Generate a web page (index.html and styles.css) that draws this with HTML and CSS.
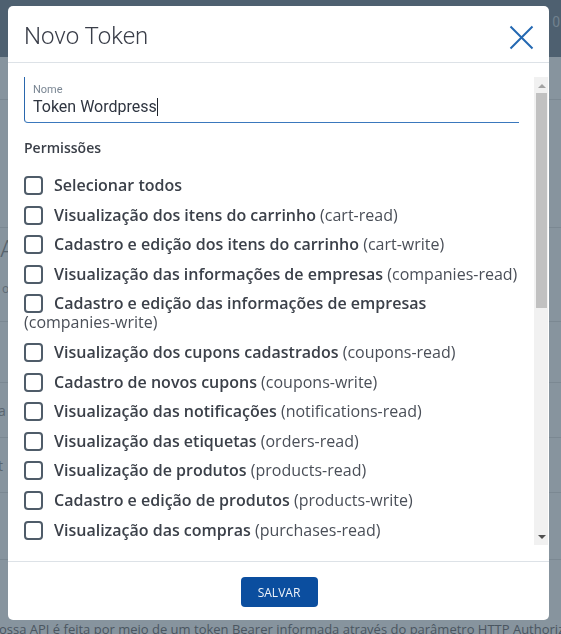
FILE: index.html
```html
<!DOCTYPE html>
<html lang="pt-BR">
<head>
<meta charset="utf-8">
<title>Novo Token</title>
<link rel="stylesheet" href="styles.css">
</head>
<body>
<div class="page">
  <header class="page-header"><span class="page-header-count">0</span></header>
  <div class="page-tabs"></div>
  <section class="page-row page-row-a"></section>
  <section class="page-row page-row-b">
    <h2 class="page-title">API</h2>
    <p class="page-sub">os tokens</p>
  </section>
  <section class="page-row page-row-c"></section>
  <section class="page-row page-row-d"><span class="page-cell">a</span></section>
  <section class="page-row page-row-d"><span class="page-cell">t</span></section>
  <section class="page-row page-row-e"></section>
  <p class="page-text">nossa API é feita por meio de um token Bearer informada através do parâmetro HTTP Authorization.</p>
</div>

<div class="backdrop">
  <div class="modal">
    <div class="modal-header">
      <h1 class="modal-title">Novo Token</h1>
      <svg class="modal-close" width="25" height="25" viewBox="0 0 25 25" aria-label="Fechar">
        <path d="M1.5 1.5 L23.5 23.5 M23.5 1.5 L1.5 23.5" stroke="#2468b2" stroke-width="2" fill="none"/>
      </svg>
    </div>
    <div class="modal-body">
      <div class="modal-scroll">
        <div class="field">
          <div class="field-label">Nome</div>
          <div class="field-value">Token Wordpress<span class="caret"></span></div>
        </div>
        <h3 class="perm-title">Permissões</h3>
        <div class="perm-list">
          <label class="perm"><span class="box"></span><b>Selecionar todos</b></label>
          <label class="perm"><span class="box"></span><b>Visualização dos itens do carrinho</b> (cart-read)</label>
          <label class="perm"><span class="box"></span><b>Cadastro e edição dos itens do carrinho</b> (cart-write)</label>
          <label class="perm"><span class="box"></span><b>Visualização das informações de empresas</b> (companies-read)</label>
          <label class="perm"><span class="box"></span><b>Cadastro e edição das informações de empresas</b> (companies-write)</label>
          <label class="perm"><span class="box"></span><b>Visualização dos cupons cadastrados</b> (coupons-read)</label>
          <label class="perm"><span class="box"></span><b>Cadastro de novos cupons</b> (coupons-write)</label>
          <label class="perm"><span class="box"></span><b>Visualização das notificações</b> (notifications-read)</label>
          <label class="perm"><span class="box"></span><b>Visualização das etiquetas</b> (orders-read)</label>
          <label class="perm"><span class="box"></span><b>Visualização de produtos</b> (products-read)</label>
          <label class="perm"><span class="box"></span><b>Cadastro e edição de produtos</b> (products-write)</label>
          <label class="perm"><span class="box"></span><b>Visualização das compras</b> (purchases-read)</label>
          <label class="perm"><span class="box"></span><b>Cadastro e edição das compras</b> (purchases-write)</label>
          <label class="perm"><span class="box"></span><b>Visualização das vendas</b> (sales-read)</label>
          <label class="perm"><span class="box"></span><b>Cadastro e edição das vendas</b> (sales-write)</label>
        </div>
      </div>
      <div class="scrollbar" aria-hidden="true">
        <span class="scroll-btn"><span class="arrow-up"></span></span>
        <span class="scroll-thumb"></span>
        <span class="scroll-track"></span>
        <span class="scroll-btn"><span class="arrow-down"></span></span>
      </div>
    </div>
    <div class="modal-footer">
      <button class="btn-save" type="button">SALVAR</button>
    </div>
  </div>
</div>
</body>
</html>
```

FILE: styles.css
```css
html, body {
  margin: 0;
  padding: 0;
  overflow: hidden;
}

body {
  width: 561px;
  height: 634px;
  background: #87949e;
  font-family: "Open Sans", "Noto Sans", sans-serif;
}

/* ---- dimmed page behind the modal ---- */
.page {
  margin-left: -9px;
}

.page-header {
  height: 57px;
  background: #4e6070;
  display: flex;
  justify-content: flex-end;
  align-items: center;
  padding-right: 1px;
  box-sizing: border-box;
  padding-bottom: 14px;
}

.page-header-count {
  font-family: "Roboto", sans-serif;
  font-size: 14px;
  color: #71828f;
}

.page-tabs {
  height: 43px;
  border-bottom: 1px solid #7b8892;
  box-sizing: border-box;
}

.page-row {
  border-bottom: 1px solid #7b8892;
  box-sizing: border-box;
  padding-left: 9px;
}

.page-row-a { height: 128px; }
.page-row-b { height: 94px; padding-top: 6px; }
.page-row-c { height: 61px; }
.page-row-d { height: 55px; display: flex; align-items: center; padding-left: 7px; }
.page-row-e { height: 67px; }

.page-title {
  margin: 0;
  font-weight: 300;
  font-size: 24px;
  line-height: 30px;
  color: #56626c;
  font-family: "Roboto", sans-serif;
}

.page-sub {
  margin: 16px 0 0 2px;
  font-size: 12px;
  color: #5f6b75;
}

.page-cell {
  font-size: 14px;
  color: #5a6670;
}

.page-text {
  margin: 61px 0 0;
  font-size: 13px;
  line-height: 16px;
  white-space: nowrap;
  color: #4a5560;
}

/* ---- modal ---- */
.backdrop {
  position: fixed;
  inset: 0;
}

.modal {
  margin: 6px 0 0 8px;
  width: 541px;
  height: 614px;
  background: #fff;
  border-radius: 5px;
  display: flex;
  flex-direction: column;
  overflow: hidden;
}

.modal-header {
  display: flex;
  justify-content: space-between;
  align-items: flex-start;
  padding: 16px 15px 12px 16px;
  border-bottom: 1px solid #dde2e7;
}

.modal-title {
  margin: 0;
  font-family: "Roboto", sans-serif;
  font-weight: 300;
  font-size: 24px;
  line-height: 28px;
  color: #3a3e49;
}

.modal-close {
  display: block;
  margin-top: 3px;
}

.modal-body {
  display: flex;
  padding: 14px 1px 16px 0;
  border-bottom: 1px solid #dde2e7;
}

.modal-scroll {
  flex: 1;
  height: 468px;
  overflow: hidden;
  padding: 0 15px 0 16px;
}

/* drawn scrollbar of the scroll area */
.scrollbar {
  width: 14px;
  height: 468px;
  background: #f1f1f1;
  display: flex;
  flex-direction: column;
}

.scroll-btn {
  height: 15px;
  display: flex;
  align-items: center;
  justify-content: center;
  padding-left: 1px;
}

.arrow-up {
  width: 0;
  height: 0;
  border-left: 4px solid transparent;
  border-right: 4px solid transparent;
  border-bottom: 4px solid #a3a3a3;
  margin-top: 3px;
}

.arrow-down {
  width: 0;
  height: 0;
  border-left: 4px solid transparent;
  border-right: 4px solid transparent;
  border-top: 4px solid #505050;
  margin-bottom: 1px;
}

.scroll-thumb {
  height: 215px;
  margin: 1px 1px 0 2px;
  background: #c1c1c1;
}

.scroll-track {
  flex: 1;
}

/* input */
.field {
  height: 46px;
  box-sizing: border-box;
  padding: 6px 8px 0;
  border-left: 1px solid #2a67ad;
  border-bottom: 1px solid #3a78bd;
  border-bottom-left-radius: 4px;
}

.field-label {
  font-family: "Roboto", sans-serif;
  font-size: 11px;
  line-height: 14px;
  color: #7a8693;
}

.field-value {
  font-family: "Roboto", sans-serif;
  font-size: 16px;
  line-height: 20px;
  color: #2f3540;
}

.caret {
  display: inline-block;
  width: 1px;
  height: 18px;
  background: #1d232b;
  vertical-align: -4px;
}

/* permissions */
.perm-title {
  margin: 15px 0 0;
  font-size: 14px;
  line-height: 20px;
  font-weight: 600;
  color: #3a3f48;
}

.perm-list {
  display: flex;
  flex-direction: column;
  gap: 10.6px;
  margin-top: 18px;
}

.perm {
  display: block;
  font-size: 16px;
  line-height: 19px;
  color: #4a4f58;
}

.perm b {
  font-weight: 600;
  color: #3b4049;
}

.box {
  display: inline-block;
  width: 19px;
  height: 19px;
  box-sizing: border-box;
  border: 2px solid #4f5c69;
  border-radius: 4px;
  margin-right: 11px;
  vertical-align: top;
}

/* footer */
.modal-footer {
  display: flex;
  justify-content: center;
  padding-top: 15px;
}

.btn-save {
  width: 77px;
  height: 30px;
  border: none;
  border-radius: 4px;
  background: #0b4e9f;
  color: #eef3fa;
  font-family: "Open Sans", sans-serif;
  font-size: 12px;
  padding: 0;
  margin-left: 1px;
}
```
